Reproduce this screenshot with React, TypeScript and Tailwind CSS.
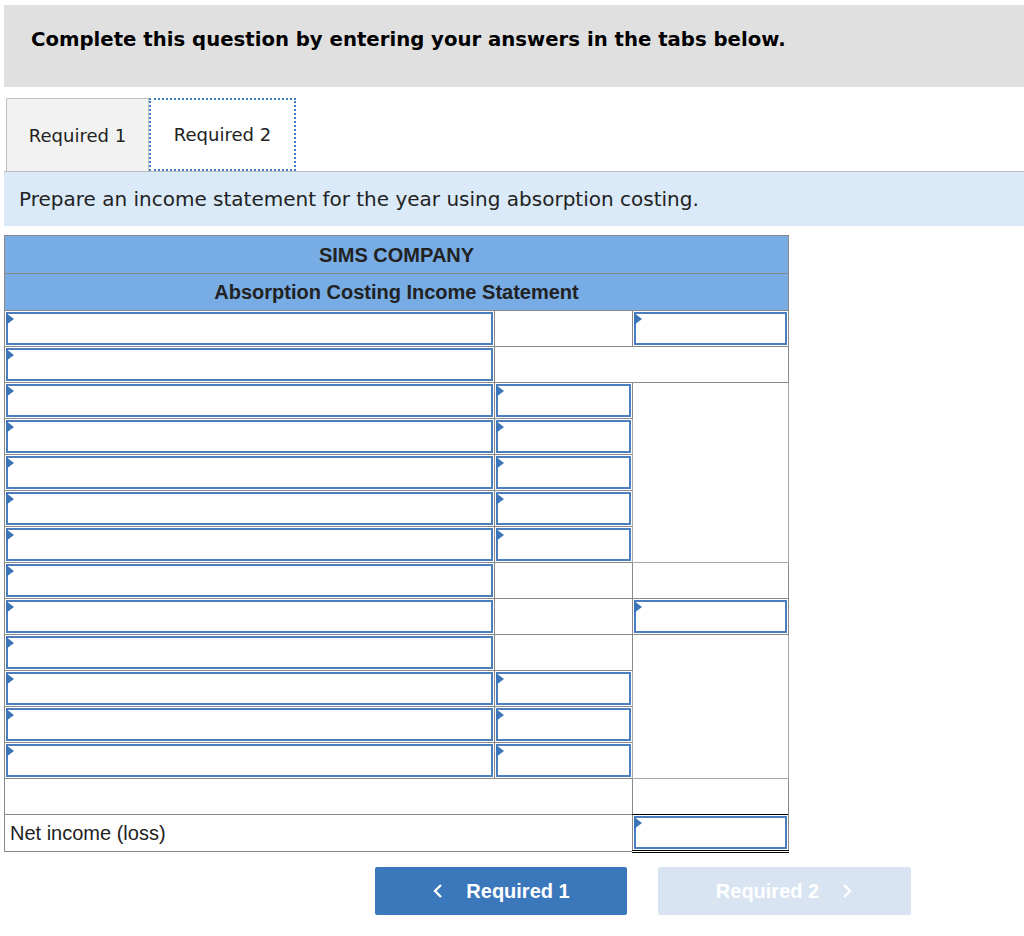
import React from 'react'

const verdana = 'font-["DejaVu_Sans",Verdana,sans-serif]'
const arial = 'font-["Liberation_Sans",Arial,sans-serif]'

function Entry({ marker = true, className = '' }: { marker?: boolean; className?: string }) {
  return (
    <div className={`relative h-[33px] border-2 border-[#4a7ebf] bg-white ${className}`}>
      {marker && (
        <span className="absolute -left-[2px] -top-[1px] h-0 w-0 border-y-[6px] border-l-[8px] border-y-transparent border-l-[#3b74b8]" />
      )}
    </div>
  )
}

const cell = 'border border-[#8a8a8a] p-[1px] align-top'

export default function App() {
  return (
    <div className={`min-h-[936px] w-[1024px] bg-white pt-[5px] ${verdana}`}>
      <div className="ml-[4px] h-[82px] bg-[#e0e0e0] pl-[27px] pt-[22px]">
        <h1 className="text-[19.7px] font-bold leading-[26px] text-black">
          Complete this question by entering your answers in the tabs below.
        </h1>
      </div>

      <div className="mt-[11px] flex pl-[6px]">
        <button className="flex h-[73px] w-[143px] items-center justify-center border border-b-0 border-[#c2c2c2] bg-[#f2f2f2] text-[18px] text-[#222]">
          Required 1
        </button>
        <button className="flex h-[73px] w-[147px] items-center justify-center border-2 border-dotted border-[#3d7cc9] bg-white text-[18px] text-[#222]">
          Required 2
        </button>
      </div>

      <div className="ml-[4px] flex h-[55px] items-center border-t border-[#bdbdbd] bg-[#daeaf8] pl-[15px] text-[20px] text-[#222]">
        Prepare an income statement for the year using absorption costing.
      </div>

      <table className={`ml-[4px] mt-[9px] w-[784px] table-fixed border-collapse border border-[#8a8a8a] ${arial}`}>
        <colgroup>
          <col className="w-[490px]" />
          <col className="w-[138px]" />
          <col className="w-[156px]" />
        </colgroup>
        <tbody>
          <tr className="h-[38px] bg-[#77ace4]">
            <td colSpan={3} className="border border-[#8a8a8a] text-center text-[20px] font-bold text-[#222]">
              SIMS COMPANY
            </td>
          </tr>
          <tr className="h-[37px] bg-[#77ace4]">
            <td colSpan={3} className="border border-[#8a8a8a] text-center text-[20px] font-bold text-[#222]">
              Absorption Costing Income Statement
            </td>
          </tr>

          <tr className="h-[36px]">
            <td className={cell}><Entry /></td>
            <td className={cell}></td>
            <td className={cell}><Entry /></td>
          </tr>
          <tr className="h-[36px]">
            <td className={cell}><Entry /></td>
            <td colSpan={2} className={cell}></td>
          </tr>
          <tr className="h-[36px]">
            <td className={cell}><Entry /></td>
            <td className={cell}><Entry /></td>
            <td rowSpan={5} className="border border-[#a8a8a8]"></td>
          </tr>
          {[0, 1, 2, 3].map((i) => (
            <tr key={i} className="h-[36px]">
              <td className={cell}><Entry /></td>
              <td className={cell}><Entry /></td>
            </tr>
          ))}
          <tr className="h-[36px]">
            <td className={cell}><Entry /></td>
            <td className={`${cell} border-t-black`}></td>
            <td className={cell}></td>
          </tr>
          <tr className="h-[36px]">
            <td className={cell}><Entry /></td>
            <td className={cell}></td>
            <td className={`${cell} border-t-black`}><Entry /></td>
          </tr>
          <tr className="h-[36px]">
            <td className={cell}><Entry /></td>
            <td className={cell}></td>
            <td rowSpan={4} className="border border-[#a8a8a8]"></td>
          </tr>
          {[0, 1, 2].map((i) => (
            <tr key={i} className="h-[36px]">
              <td className={cell}><Entry /></td>
              <td className={cell}><Entry /></td>
            </tr>
          ))}
          <tr className="h-[36px]">
            <td colSpan={2} className={cell}></td>
            <td className={cell}></td>
          </tr>
          <tr className="h-[35px]">
            <td colSpan={2} className="border border-[#8a8a8a] pl-[5px] align-middle text-[20px] text-[#222]">
              Net income (loss)
            </td>
            <td className={`${cell} border-t-black border-b-[3px] border-b-black border-double`}>
              <Entry className="h-[29px]" />
            </td>
          </tr>
        </tbody>
      </table>

      <div className={`mt-[14px] flex gap-[31px] pl-[375px] ${arial}`}>
        <button className="flex h-[48px] w-[252px] items-center justify-center gap-[22px] rounded-[2px] bg-[#3b77bb] text-[20px] font-bold text-white">
          <svg width="12" height="16" viewBox="0 0 12 16" fill="none">
            <path d="M9 2 L3 8 L9 14" stroke="white" strokeWidth="2.4" />
          </svg>
          Required 1
        </button>
        <button className="flex h-[48px] w-[253px] items-center justify-center gap-[22px] rounded-[2px] bg-[#d8e4f2] text-[20px] font-bold text-white">
          Required 2
          <svg width="12" height="16" viewBox="0 0 12 16" fill="none">
            <path d="M3 2 L9 8 L3 14" stroke="white" strokeWidth="2.4" />
          </svg>
        </button>
      </div>
    </div>
  )
}
